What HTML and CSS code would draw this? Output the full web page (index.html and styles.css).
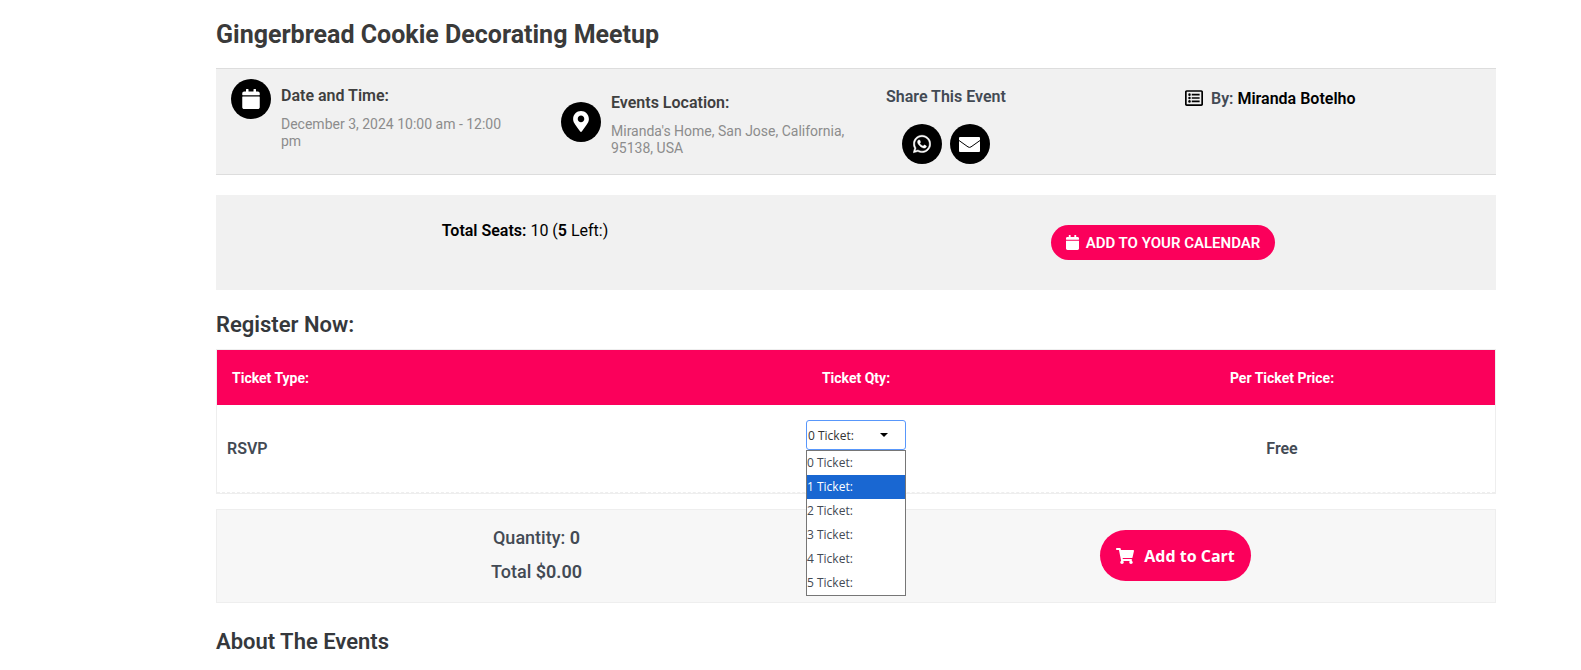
FILE: index.html
```
<!DOCTYPE html>
<html lang="en">

<head>
    <meta charset="UTF-8">
    <meta name="viewport" content="width=device-width, initial-scale=1.0">
    <title>Gingerbread Cookie Decorating Meetup</title>
    <link rel="stylesheet" href="styles.css">
</head>

<body>
    <main class="event">
        <h1>Gingerbread Cookie Decorating Meetup</h1>

        <section class="info">
            <div class="info_item info_date">
                <span class="round_icon">
                    <svg width="18" height="20" viewBox="0 0 448 512" fill="currentColor"><path d="M12 192h424c6.600 0 12 5.400 12 12v260c0 26.500-21.500 48-48 48H48c-26.500 0-48-21.500-48-48V204c0-6.600 5.400-12 12-12zm436-44v-36c0-26.500-21.500-48-48-48h-48V12c0-6.600-5.400-12-12-12h-40c-6.600 0-12 5.400-12 12v52H160V12c0-6.600-5.400-12-12-12h-40c-6.600 0-12 5.400-12 12v52H48C21.500 64 0 85.500 0 112v36c0 6.600 5.400 12 12 12h424c6.600 0 12-5.400 12-12z"/></svg>
                </span>
                <div class="info_text">
                    <h3>Date and Time:</h3>
                    <p>December 3, 2024 10:00 am - 12:00 pm</p>
                </div>
            </div>
            <div class="info_item info_location">
                <span class="round_icon">
                    <svg width="16" height="21" viewBox="0 0 384 512" fill="currentColor"><path d="M172.268 501.670C26.970 291.031 0 269.413 0 192 0 85.961 85.961 0 192 0s192 85.961 192 192c0 77.413-26.970 99.031-172.268 309.670-9.535 13.774-29.930 13.773-39.464 0zM192 272c44.183 0 80-35.817 80-80s-35.817-80-80-80-80 35.817-80 80 35.817 80 80 80z"/></svg>
                </span>
                <div class="info_text">
                    <h3>Events Location:</h3>
                    <p>Miranda's Home, San Jose, California, 95138, USA</p>
                </div>
            </div>
            <div class="info_item info_share">
                <div class="share">
                    <h3>Share This Event</h3>
                    <div class="share_links">
                        <a class="round_icon" href="#" aria-label="WhatsApp">
                            <svg width="18" height="20" viewBox="0 0 448 512" fill="currentColor" stroke="currentColor" stroke-width="12"><path d="M380.900 97.100C339 55.100 283.200 32 223.900 32c-122.400 0-222 99.600-222 222 0 39.100 10.200 77.300 29.600 111L0 480l117.700-30.900c32.400 17.700 68.900 27 106.100 27h.1c122.300 0 224.100-99.600 224.100-222 0-59.300-25.200-115-67.100-157zm-157 341.600c-33.200 0-65.700-8.900-94-25.700l-6.700-4-69.800 18.300L72 359.200l-4.400-7c-18.500-29.400-28.200-63.300-28.200-98.200 0-101.700 82.800-184.500 184.600-184.500 49.300 0 95.600 19.200 130.400 54.100 34.800 34.900 56.200 81.200 56.100 130.500 0 101.800-84.900 184.600-186.600 184.600zm101.200-138.200c-5.500-2.800-32.800-16.200-37.900-18-5.100-1.900-8.800-2.800-12.500 2.800-3.700 5.600-14.300 18-17.600 21.800-3.200 3.700-6.500 4.200-12 1.400-32.600-16.300-54-29.100-75.500-66-5.700-9.800 5.700-9.100 16.300-30.300 1.800-3.700.9-6.900-.5-9.700-1.400-2.800-12.500-30.100-17.100-41.200-4.500-10.800-9.100-9.300-12.500-9.500-3.200-.2-6.900-.2-10.600-.2-3.700 0-9.700 1.400-14.800 6.900-5.100 5.600-19.400 19-19.400 46.300 0 27.300 19.900 53.700 22.600 57.400 2.800 3.700 39.100 59.700 94.800 83.800 35.200 15.200 49 16.500 66.600 13.900 10.700-1.600 32.800-13.400 37.400-26.400 4.600-13 4.600-24.100 3.200-26.400-1.300-2.500-5-3.900-10.500-6.600z"/></svg>
                        </a>
                        <a class="round_icon" href="#" aria-label="Email">
                            <svg width="21" height="15" viewBox="0 0 21 15"><rect width="21" height="15" rx="1" fill="#fff"/><path d="M0 3.500l9 6.400q1.500 1 3 0l9-6.400" fill="none" stroke="#000"/></svg>
                        </a>
                    </div>
                </div>
            </div>
            <div class="info_item info_author">
                <svg width="18" height="18" viewBox="0 0 512 512"><path d="M464 32H48C21.490 32 0 53.490 0 80v352c0 26.510 21.490 48 48 48h416c26.510 0 48-21.490 48-48V80c0-26.510-21.490-48-48-48zm-6 400H54a6 6 0 0 1-6-6V86a6 6 0 0 1 6-6h404a6 6 0 0 1 6 6v340a6 6 0 0 1-6 6z"/><path d="M192 136h224v48H192zM192 232h224v48H192zM192 328h224v48H192z"/><circle cx="128" cy="160" r="36"/><circle cx="128" cy="256" r="36"/><circle cx="128" cy="352" r="36"/></svg>
                <h3>By: <a href="#">Miranda Botelho</a></h3>
            </div>
        </section>

        <section class="seats">
            <p><b>Total Seats:</b> 10 (<b>5</b> Left:)</p>
            <div>
                <button class="btn btn_calendar" type="button">
                    <svg width="13" height="15" viewBox="0 0 448 512" fill="currentColor"><path d="M12 192h424c6.600 0 12 5.400 12 12v260c0 26.500-21.500 48-48 48H48c-26.500 0-48-21.500-48-48V204c0-6.600 5.400-12 12-12zm436-44v-36c0-26.500-21.500-48-48-48h-48V12c0-6.600-5.400-12-12-12h-40c-6.600 0-12 5.400-12 12v52H160V12c0-6.600-5.400-12-12-12h-40c-6.600 0-12 5.400-12 12v52H48C21.500 64 0 85.500 0 112v36c0 6.600 5.400 12 12 12h424c6.600 0 12-5.400 12-12z"/></svg>
                    ADD TO YOUR CALENDAR
                </button>
            </div>
        </section>

        <form action="#" method="post">
            <h2>Register Now:</h2>
            <table class="tickets">
                <thead>
                    <tr>
                        <th>Ticket Type:</th>
                        <th>Ticket Qty:</th>
                        <th>Per Ticket Price:</th>
                    </tr>
                </thead>
                <tbody>
                    <tr>
                        <td>RSVP</td>
                        <td class="tickets_qty">
                            <div class="qty">
                                <select name="qty" aria-label="Ticket Qty">
                                    <option>0 Ticket:</option>
                                    <option>1 Ticket:</option>
                                    <option>2 Ticket:</option>
                                    <option>3 Ticket:</option>
                                    <option>4 Ticket:</option>
                                    <option>5 Ticket:</option>
                                </select>
                                <svg class="qty_arrow" width="8" height="4" viewBox="0 0 8 4"><path d="M0 0h8L4 4z"/></svg>
                                <ul class="qty_list">
                                    <li>0 Ticket:</li>
                                    <li class="active">1 Ticket:</li>
                                    <li>2 Ticket:</li>
                                    <li>3 Ticket:</li>
                                    <li>4 Ticket:</li>
                                    <li>5 Ticket:</li>
                                </ul>
                            </div>
                        </td>
                        <td>Free</td>
                    </tr>
                </tbody>
            </table>

            <div class="total">
                <div class="total_text">
                    <p>Quantity: <b>0</b></p>
                    <p>Total <b>$0.00</b></p>
                </div>
                <div>
                    <button class="btn btn_cart" type="submit">
                        <svg width="18" height="16" viewBox="0 0 576 512" fill="currentColor"><path d="M528.120 301.319l47.273-208C578.806 78.301 567.391 64 551.990 64H159.208l-9.166-44.810C147.758 8.021 137.930 0 126.529 0H24C10.745 0 0 10.745 0 24v16c0 13.255 10.745 24 24 24h69.883l70.248 343.435C147.325 417.100 136 435.222 136 456c0 30.928 25.072 56 56 56s56-25.072 56-56c0-15.674-6.447-29.835-16.824-40h209.647C430.447 426.165 424 440.326 424 456c0 30.928 25.072 56 56 56s56-25.072 56-56c0-22.172-12.888-41.332-31.579-50.405l5.517-24.276c3.413-15.018-8.002-29.319-23.403-29.319H218.117l-6.545-32h293.145c11.206 0 20.920-7.754 23.403-18.681z"/></svg>
                        Add to Cart
                    </button>
                </div>
            </div>
        </form>

        <h2>About The Events</h2>
    </main>
</body>

</html>
```
FILE: styles.css
```
* {
    box-sizing: border-box;
}

body {
    margin: 0;
    font-family: Roboto, "Liberation Sans", sans-serif;
    font-size: 16px;
    line-height: 20px;
    color: #434a54;
    background-color: #fff;
}

h1, h2, h3, p {
    margin: 0;
}

a {
    color: #000;
    text-decoration: none;
}

b {
    font-weight: 600;
}

svg {
    display: block;
    flex: none;
}

.event {
    padding: 20px 85px 0 216px;
}

h1 {
    font-size: 25px;
    line-height: 30px;
    font-weight: 700;
    color: #3a3a3a;
    margin-bottom: 18px;
}

h2 {
    font-size: 22px;
    line-height: 30px;
    font-weight: 600;
    color: #35383c;
}

h3 {
    font-size: 16px;
    font-weight: 600;
}

/* event info */
.info {
    display: grid;
    grid-template-columns: 330fr 325fr 299fr 326fr;
    background-color: #f1f1f1;
    border-top: 1px solid #ddd;
    border-bottom: 1px solid #ddd;
}

.info_item {
    display: flex;
    align-items: flex-start;
    padding: 10px 15px;
}

.info_date {
    padding-right: 35px;
}

.info_location {
    align-items: center;
}

.info_text {
    margin-left: 10px;
    padding-top: 7px;
}

.info_text h3 {
    color: #3f3f3f;
    margin-bottom: 10px;
}

.info_text p {
    font-size: 14px;
    line-height: 17px;
    color: #8c8c8c;
}

.round_icon {
    display: flex;
    flex: none;
    align-items: center;
    justify-content: center;
    width: 40px;
    height: 40px;
    border-radius: 50%;
    color: #fff;
    background-color: #000;
}

.share {
    text-align: center;
    padding-top: 8px;
}

.share_links {
    display: flex;
    justify-content: center;
    gap: 8px;
    margin-top: 17px;
}

.info_author {
    gap: 8px;
    padding-top: 20px;
}

/* seats */
.seats {
    display: grid;
    grid-template-columns: 1fr 1fr;
    gap: 20px;
    margin: 20px 0;
    padding: 26px 24px 30px 0;
    background-color: #f1f1f1;
    color: #000;
    text-align: center;
}

.seats div {
    padding-top: 4px;
}

.btn {
    display: inline-flex;
    align-items: center;
    border: none;
    color: #fff;
    background-color: #fb005b;
    cursor: pointer;
    vertical-align: top;
}

.btn_calendar {
    gap: 7px;
    height: 35px;
    padding: 0 15px;
    border-radius: 18px;
    font: 600 15px Roboto, sans-serif;
}

/* tickets */
.tickets {
    width: 100%;
    table-layout: fixed;
    border-spacing: 0;
    border: 1px solid #eee;
    margin: 9px 0 15px;
}

.tickets th {
    height: 55px;
    padding: 0 15px;
    font-size: 14px;
    font-weight: 700;
    color: #fff;
    background-color: #fb005b;
}

.tickets td {
    height: 88px;
    padding: 0 10px;
    font-weight: 600;
    text-align: center;
    border-bottom: 1px dashed #eee;
}

.tickets th:first-child,
.tickets td:first-child {
    text-align: left;
}

.tickets .tickets_qty {
    padding-top: 15px;
    vertical-align: top;
}

.qty {
    position: relative;
    width: 100px;
    margin: 0 auto;
    font: 12px "Open Sans", sans-serif;
}

.qty select {
    display: block;
    appearance: none;
    width: 100px;
    height: 30px;
    padding: 0 1px;
    border: 1px solid #5897fb;
    border-radius: 3px;
    outline: none;
    font: 500 12px "Open Sans", sans-serif;
    color: #333;
    background-color: #fff;
}

.qty_arrow {
    position: absolute;
    top: 13px;
    right: 18px;
    pointer-events: none;
}

.qty_list {
    position: absolute;
    top: 100%;
    left: 0;
    z-index: 1;
    width: 100%;
    margin: 0;
    padding: 0;
    list-style: none;
    text-align: left;
    line-height: 24px;
    color: #434a54;
    background-color: #fff;
    border: 1px solid #767676;
}

.qty_list .active {
    color: #fff;
    background-color: #1967d2;
}

/* total */
.total {
    display: grid;
    grid-template-columns: 1fr 1fr;
    text-align: center;
    padding: 11px 0 13px;
    margin-bottom: 24px;
    border: 1px solid #eee;
    background-color: #f7f7f7;
}

.total_text {
    font-size: 18px;
    line-height: 34px;
    font-weight: 500;
}

.btn_cart {
    gap: 10px;
    height: 51px;
    margin-top: 9px;
    padding: 0 16px;
    border-radius: 26px;
    font: 700 16px "Open Sans", sans-serif;
}
```
